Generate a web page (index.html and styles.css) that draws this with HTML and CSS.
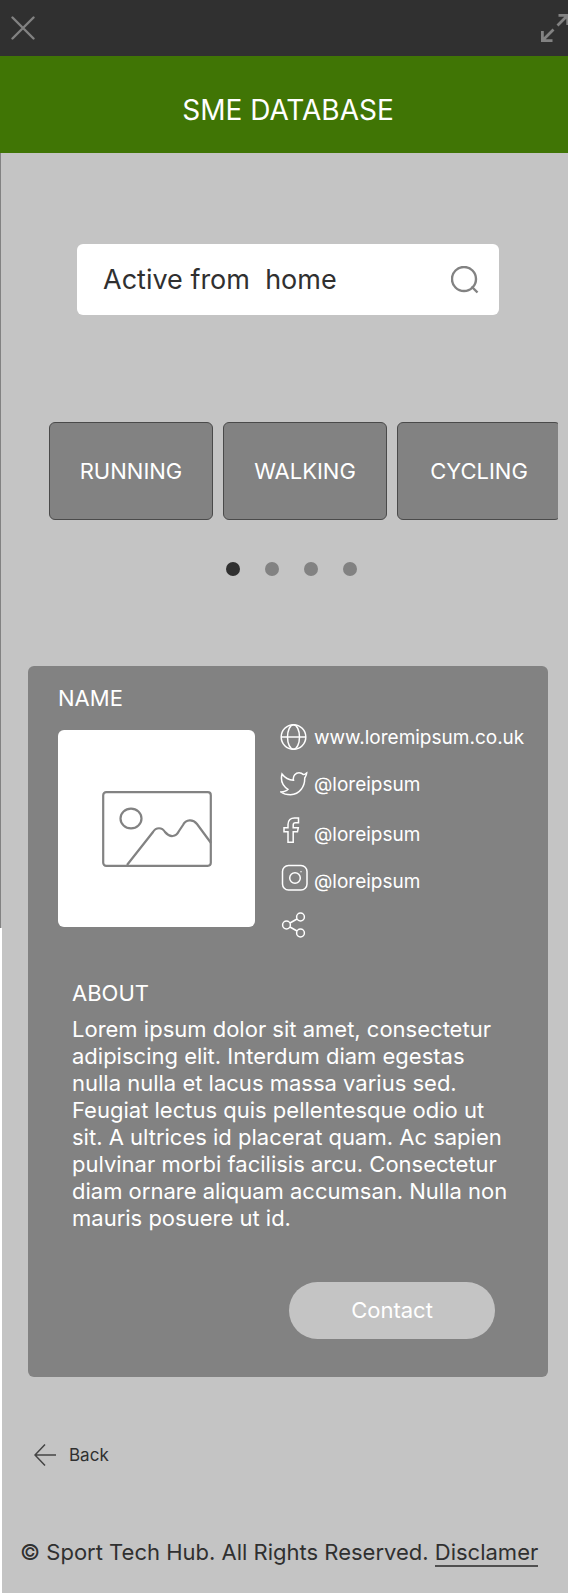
FILE: index.html
```
<!DOCTYPE html>
<html lang="en">
<head>
<meta charset="utf-8">
<meta name="viewport" content="width=device-width, initial-scale=1">
<title>SME Database</title>
<link rel="stylesheet" href="styles.css">
</head>
<body>
<div class="toolbar">
  <button class="icon-button" type="button" aria-label="Close">
    <svg width="24" height="24" viewBox="0 0 24 24" fill="none" stroke="#828282" stroke-width="2.4" stroke-linecap="round"><path d="M1.5 1.5 22.5 22.5M22.5 1.5 1.5 22.5"/></svg>
  </button>
  <button class="icon-button" type="button" aria-label="Expand">
    <svg width="27" height="28" viewBox="0 0 27 28" fill="none" stroke="#828282" stroke-width="2.8"><path d="M16.5 11.500 26.500 1.500M17.500 1.400H26.700V11M12.500 15.500 2 26M1.400 17V26.600H11.500"/></svg>
  </button>
</div>
<header class="banner"><h1 class="banner-title">SME DATABASE</h1></header>
<div class="page">
  <main class="content">
    <form class="search" role="search">
      <input class="search-input" type="text" aria-label="Search" value="Active from  home">
      <button class="icon-button" type="button" aria-label="Search">
        <svg width="28" height="28" viewBox="0 0 28 28" fill="none" stroke="#828282" stroke-width="2.4"><circle cx="13" cy="13" r="12"/><path d="M20.500 20.500 26.500 26.500"/></svg>
      </button>
    </form>
    <div class="tiles">
      <button class="tile" type="button">RUNNING</button>
      <button class="tile" type="button">WALKING</button>
      <button class="tile" type="button">CYCLING</button>
    </div>
    <div class="dots">
      <button class="dot dot-active" type="button" aria-label="Page 1"></button>
      <button class="dot" type="button" aria-label="Page 2"></button>
      <button class="dot" type="button" aria-label="Page 3"></button>
      <button class="dot" type="button" aria-label="Page 4"></button>
    </div>
    <article class="card">
      <h2 class="heading">NAME</h2>
      <div class="profile">
        <div class="photo">
          <svg width="110" height="76" viewBox="0 0 110 76" fill="none" stroke="#828282" stroke-width="2.2"><rect x="1.200" y="1.200" width="107.600" height="73.600" rx="3"/><ellipse cx="29" cy="27.500" rx="10.500" ry="9.800"/><path d="M25 74 51 41C54 36 60 36 63 41C68 47 74 46 77 40L81 34C84 28 91 28 95 33L109 52"/></svg>
        </div>
        <ul class="contacts">
          <li><a class="contact" href="#site">
            <svg width="28" height="28" viewBox="0 0 28 28"><circle cx="13.500" cy="14" r="12.300"/><ellipse cx="13.500" cy="14" rx="6" ry="12.300"/><path d="M1 14H26"/></svg>
            <span>www.loremipsum.co.uk</span></a></li>
          <li><a class="contact" href="#twitter">
            <svg width="28" height="28" viewBox="0 0 28 28"><path d="M2 4C5 8 9 10 13.500 10.300C12.500 5.500 16 2.700 19 2.700C21 2.700 22.300 3.500 23.500 4.600C24.800 4.500 25.700 3.600 26.700 3C26.500 5.500 25.200 6.700 24.700 8C25 16 20 24.500 10.500 24.700C6.500 24.700 3.200 23.700 .8 22C4.500 21.800 6.500 21 8 19.300C2 15.500 .5 10 2 4Z"/></svg>
            <span>@loreipsum</span></a></li>
          <li><a class="contact contact-low" href="#facebook">
            <svg width="28" height="28" viewBox="0 0 28 28"><path d="M18.500 1V5.800H15.500C13.800 5.800 13.200 6.500 13.200 8V10.700H18.300L17.500 14.700H13.200V25.300H8V14.700H4V10.700H8V7.500C8 3.200 10.800 1 14.500 1Z"/></svg>
            <span>@loreipsum</span></a></li>
          <li><a class="contact contact-low" href="#instagram">
            <svg width="28" height="28" viewBox="0 0 28 28"><rect x="2.500" y="1.500" width="24.500" height="24.500" rx="6"/><circle cx="15" cy="14" r="5.300"/><path d="M21 8.200V7.200"/></svg>
            <span>@loreipsum</span></a></li>
          <li><a class="contact" href="#share" aria-label="Share">
            <svg width="28" height="28" viewBox="0 0 28 28"><circle cx="6.500" cy="14" r="3.900"/><circle cx="20.500" cy="6" r="3.900"/><circle cx="20.500" cy="22" r="3.900"/><path d="M10 12 17 8M10 16 17 20"/></svg>
          </a></li>
        </ul>
      </div>
      <section class="about">
        <h2 class="heading">ABOUT</h2>
        <p class="about-text">Lorem ipsum dolor sit amet, consectetur<br>adipiscing elit. Interdum diam egestas<br>nulla nulla et lacus massa varius sed.<br>Feugiat lectus quis pellentesque odio ut<br>sit. A ultrices id placerat quam. Ac sapien<br>pulvinar morbi facilisis arcu. Consectetur<br>diam ornare aliquam accumsan. Nulla non<br>mauris posuere ut id.</p>
      </section>
      <button class="contact-button" type="button">Contact</button>
    </article>
    <a class="back" href="#back">
      <svg width="22" height="22" viewBox="0 0 22 22" fill="none" stroke="#444" stroke-width="1.5"><path d="M22 11H1.500M11 .5 1 11 11 21.500"/></svg>
      <span>Back</span>
    </a>
  </main>
  <footer class="footer">© Sport Tech Hub. All Rights Reserved. <a class="footer-link" href="#disclaimer">Disclamer</a></footer>
</div>
</body>
</html>
```
FILE: styles.css
```
* { box-sizing: border-box; }
body {
  margin: 0;
  background: #fff;
  color: #303030;
  font-family: Inter, "Liberation Sans", sans-serif;
}
button, input { font: inherit; color: inherit; border: 0; padding: 0; background: none; }
h1, h2, p, ul { margin: 0; padding: 0; font-weight: 400; }
ul { list-style: none; }
a { color: inherit; text-decoration: none; }
svg { display: block; flex: none; }

.toolbar {
  display: flex;
  justify-content: space-between;
  align-items: center;
  height: 56px;
  padding-left: 11px;
  overflow: hidden;
  background: #303030;
}
.icon-button { flex: none; cursor: pointer; }
.banner {
  display: flex;
  align-items: center;
  justify-content: center;
  height: 97px;
  padding: 10px 0 0 8px;
  background: #407505;
}
.banner-title { color: #fff; font-size: 28px; line-height: 34px; }

.page {
  padding-left: 2px;
  border-bottom: 1px solid #fff;
  background:
    linear-gradient(#828282, #828282) 0 0 / 1px 775px no-repeat,
    linear-gradient(transparent 775px, #fff 775px) 0 0 / 2px 100% no-repeat,
    #c4c4c4;
}
.content { display: flex; flex-direction: column; }
.search {
  display: flex;
  align-items: center;
  height: 71px;
  margin: 91px 69px 0 75px;
  padding: 0 20px 0 26px;
  border-radius: 6px;
  background: #fff;
}
.search-input { flex: 1; min-width: 0; font-size: 27px; line-height: 36px; outline: 0; }

.tiles {
  display: flex;
  gap: 10px;
  margin: 107px 10px 0 47px;
  overflow: hidden;
}
.tile {
  flex: none;
  width: 164px;
  height: 98px;
  border: 1px solid #4a4a4a;
  border-radius: 6px;
  background: #828282;
  color: #fff;
  font-size: 22px;
}
.dots { display: flex; justify-content: center; gap: 25px; margin: 42px 0 0 13px; }
.dot { width: 14px; height: 14px; border-radius: 50%; background: #828282; }
.dot-active { background: #303030; }

.card {
  display: flex;
  flex-direction: column;
  margin: 90px 20px 0 26px;
  padding: 19px 22px 38px 30px;
  border-radius: 6px;
  background: #828282;
  color: #fff;
}
.heading { font-size: 22px; line-height: 27px; }
.profile { display: flex; gap: 25px; margin-top: 18px; }
.photo {
  display: flex;
  align-items: center;
  justify-content: center;
  flex: none;
  width: 197px;
  height: 197px;
  border-radius: 6px;
  background: #fff;
}
.contacts { flex: 1; margin-top: -17px; }
.contacts svg { fill: none; stroke: #fff; stroke-width: 1.5; }
.contact { display: flex; align-items: center; gap: 6px; height: 47px; font-size: 19px; }
.contact span { padding-top: 2px; }
.contact-low span { padding-top: 8px; }
.about { margin: 32px 0 0 14px; }
.about-text { margin-top: 9px; font-size: 22px; line-height: 27px; }
.contact-button {
  align-self: flex-end;
  width: 206px;
  height: 57px;
  margin: 50px 31px 0 0;
  padding-bottom: 2px;
  border-radius: 29px;
  background: #c4c4c4;
  font-size: 22px;
  color: #fff;
}
.back {
  display: flex;
  align-items: center;
  align-self: flex-start;
  gap: 13px;
  margin: 66px 0 0 32px;
  font-size: 17px;
  line-height: 24px;
}
.footer { padding: 70px 0 26px 18px; font-size: 22px; line-height: 30px; white-space: nowrap; }
.footer-link { border-bottom: 2px solid #505050; }
```
